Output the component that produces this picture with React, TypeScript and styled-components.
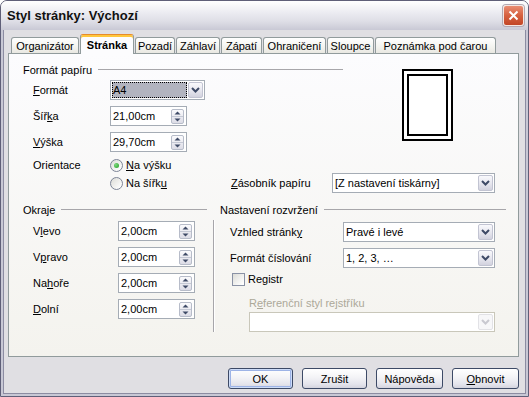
import React from "react";
import styled, { createGlobalStyle, css } from "styled-components";

const GlobalStyle = createGlobalStyle`
  html, body { margin: 0; padding: 0; background: #ffffff; }
  body { font-family: "Liberation Sans", Arial, sans-serif; font-size: 11px; color: #000; }
  * { box-sizing: border-box; }
`;

const Window = styled.div`
  width: 529px;
  height: 397px;
  display: flex;
  flex-direction: column;
  border: 1px solid #5f5f78;
  border-radius: 7px 7px 0 0;
  overflow: hidden;
  background: #e0dfe3;
`;

const TitleBar = styled.div`
  height: 29px;
  flex: none;
  display: flex;
  align-items: center;
  padding: 0 4px 0 6px;
  background: linear-gradient(180deg, #ffffff 0%, #eeeef3 35%, #dedee6 70%, #c9c9d5 100%);
`;

const Title = styled.div`
  flex: 1;
  font-family: "Liberation Sans", Arial, sans-serif;
  font-weight: bold;
  font-size: 13px;
  color: #111;
`;

const CloseButton = styled.div`
  width: 21px;
  height: 21px;
  border: 1px solid #f4e6e2;
  border-radius: 3px;
  background: linear-gradient(180deg, #e98d73 0%, #d6603f 50%, #c24626 100%);
  display: flex;
  align-items: center;
  justify-content: center;
  box-shadow: 0 0 0 1px #b3a9b3;
`;

const Frame = styled.div`
  flex: 1;
  display: flex;
  flex-direction: column;
  border: 2px solid #c8c8d5;
  border-top: 0;
  box-shadow: inset 1px 0 #8c8ca2, inset -1px 0 #8c8ca2, inset 0 -1px #8c8ca2;
  padding: 4px 7px 0 5px;
`;

const TabStrip = styled.div`
  position: relative;
  z-index: 1;
  height: 20px;
  margin-bottom: -1px;
  display: flex;
  align-items: flex-end;
  gap: 1px;
  padding-left: 3px;
`;

const Tab = styled.div<{ $w: number; $active?: boolean }>`
  width: ${(p) => p.$w}px;
  flex: none;
  display: flex;
  align-items: center;
  justify-content: center;
  white-space: nowrap;
  border: 1px solid #919b9c;
  border-bottom: 0;
  border-radius: 3px 3px 0 0;
  ${(p) =>
    p.$active
      ? css`
          height: 20px;
          font-weight: bold;
          border-top-color: #e68b2c;
          background: #fcfcfe;
          box-shadow: inset 0 2px #ffc73c;
          padding-top: 1px;
        `
      : css`
          height: 16px;
          margin-bottom: 1px;
          background: linear-gradient(180deg, #ffffff 0%, #f3f3ef 60%, #e9e8e2 100%);
        `}
`;

const Panel = styled.div`
  position: relative;
  height: 304px;
  flex: none;
  border: 1px solid #919b9c;
  background: linear-gradient(180deg, #fcfcfe 0%, #f4f3ee 100%);
  padding: 8px 14px 0 14px;
`;

const GroupHeader = styled.div<{ $w?: number }>`
  display: flex;
  align-items: center;
  gap: 6px;
  height: 16px;
  white-space: nowrap;
  ${(p) => (p.$w ? `width: ${p.$w}px;` : "")}
  &::after {
    content: "";
    flex: 1;
    border-top: 1px solid #a7a6aa;
    margin-top: -2px;
  }
`;

const PaperGrid = styled.div`
  display: grid;
  grid-template-columns: 87px 120px 102px 163px;
  grid-template-rows: 16px 22px 26px 26px 21px 20px;
  align-items: end;
`;

const Cell = styled.div<{ $col: string; $row: string; $h?: number }>`
  grid-column: ${(p) => p.$col};
  grid-row: ${(p) => p.$row};
  height: ${(p) => p.$h ?? 20}px;
  display: flex;
  align-items: center;
`;

const FieldLabel = styled.div<{ $indent?: number; $w?: number; $disabled?: boolean }>`
  padding-left: ${(p) => p.$indent ?? 10}px;
  ${(p) => (p.$w ? `width: ${p.$w}px; flex: none;` : "")}
  white-space: nowrap;
  color: ${(p) => (p.$disabled ? "#aca899" : "#000")};
`;

const U = styled.span`
  text-decoration: underline;
  text-underline-offset: 1px;
`;

const Field = styled.div<{ $w: number; $disabled?: boolean }>`
  width: ${(p) => p.$w}px;
  height: 20px;
  flex: none;
  display: flex;
  align-items: center;
  background: #ffffff;
  border: 1px solid ${(p) => (p.$disabled ? "#c9c7ba" : "#a5acb5")};
  padding: 1px;
`;

const FieldText = styled.div<{ $focused?: boolean }>`
  flex: 1;
  height: 100%;
  display: flex;
  align-items: center;
  padding-left: 1px;
  white-space: nowrap;
  ${(p) =>
    p.$focused &&
    css`
      background: #b2b4bf;
      outline: 1px dotted #000;
      outline-offset: -1px;
      margin-right: 1px;
    `}
`;

const SpinButton = styled.div`
  width: 13px;
  height: 15px;
  flex: none;
  display: flex;
  flex-direction: column;
  border: 1px solid #b7bcc9;
  border-radius: 2px;
  background: linear-gradient(180deg, #fbfbfd 0%, #dcdce6 100%);
  margin-right: 1px;
`;

const SpinHalf = styled.div<{ $top?: boolean }>`
  flex: 1;
  display: flex;
  align-items: center;
  justify-content: center;
  ${(p) => p.$top && "border-bottom: 1px solid #c4c8d4;"}
`;

const DropButton = styled.div<{ $disabled?: boolean }>`
  width: 15px;
  height: 16px;
  flex: none;
  display: flex;
  align-items: center;
  justify-content: center;
  border: 1px solid ${(p) => (p.$disabled ? "#e2e2e6" : "#c2c4d2")};
  border-radius: 2px;
  background: ${(p) =>
    p.$disabled ? "#f7f7f9" : "linear-gradient(180deg, #f9f9fc 0%, #e6e6ee 55%, #d2d2de 100%)"};
`;

const Preview = styled.div`
  grid-column: 4;
  grid-row: 1 / 5;
  align-self: start;
  margin: 7px 0 0 70px;
  width: 51px;
  height: 72px;
  border: 2px solid #000;
  background: #fff;
  padding: 3px;
`;

const PreviewInner = styled.div`
  width: 100%;
  height: 100%;
  border: 2px solid #000;
`;

const RadioRow = styled.div`
  display: flex;
  align-items: center;
  gap: 3px;
`;

const RadioCircle = styled.div<{ $checked?: boolean }>`
  width: 13px;
  height: 13px;
  border-radius: 50%;
  border: 1px solid #7d8597;
  background: linear-gradient(135deg, #dcdcd7 0%, #ffffff 90%);
  display: flex;
  align-items: center;
  justify-content: center;
  &::after {
    content: "";
    width: 5px;
    height: 5px;
    border-radius: 50%;
    background: ${(p) => (p.$checked ? "radial-gradient(circle at 35% 35%, #7fd77f, #21a121)" : "transparent")};
  }
`;

const CheckBox = styled.div`
  width: 13px;
  height: 13px;
  flex: none;
  border: 1px solid #8a92a5;
  background: linear-gradient(135deg, #dcdcd7 0%, #ffffff 90%);
`;

const LowerSection = styled.div`
  display: flex;
  margin-top: 9px;
`;

const LeftGroup = styled.div`
  width: 184px;
  flex: none;
`;

const MarginRows = styled.div`
  display: flex;
  flex-direction: column;
  gap: 6px;
  margin-top: 3px;
`;

const Row = styled.div<{ $mt?: number; $h?: number; $indent?: number }>`
  display: flex;
  align-items: center;
  height: ${(p) => p.$h ?? 20}px;
  margin-top: ${(p) => p.$mt ?? 0}px;
  padding-left: ${(p) => p.$indent ?? 0}px;
`;

const VLine = styled.div`
  width: 2px;
  height: 112px;
  flex: none;
  margin: 18px 5px 0 6px;
  border-left: 1px solid #a7a6aa;
  border-right: 1px solid #ffffff;
`;

const RightGroup = styled.div`
  width: 286px;
  flex: none;
`;

const CheckRow = styled.div`
  display: flex;
  align-items: center;
  gap: 3px;
`;

const ButtonRow = styled.div`
  display: flex;
  justify-content: flex-end;
  gap: 9px;
  margin-top: 11px;
`;

const Button = styled.div<{ $w: number; $default?: boolean }>`
  width: ${(p) => p.$w}px;
  height: 21px;
  display: flex;
  align-items: center;
  justify-content: center;
  border: 1px solid #3d4a66;
  border-radius: 3px;
  background: linear-gradient(180deg, #ffffff 0%, #f3f3f6 45%, #e4e4ec 80%, #d4d4de 100%);
  ${(p) =>
    p.$default &&
    css`
      box-shadow: inset 0 0 0 1px #cddcf8, inset 0 0 0 2px #9db3e6;
    `}
`;

const Chevron = ({ color = "#3e4a66" }: { color?: string }) => (
  <svg width="9" height="6" viewBox="0 0 9 6">
    <path d="M1 1 L4.5 4.5 L8 1" stroke={color} strokeWidth="2" fill="none" />
  </svg>
);

const Arrow = ({ up }: { up?: boolean }) => (
  <svg width="7" height="4" viewBox="0 0 7 4">
    <path d={up ? "M0.5 3.5 L3.5 0.5 L6.5 3.5 Z" : "M0.5 0.5 L3.5 3.5 L6.5 0.5 Z"} fill="#3e4a66" />
  </svg>
);

const Spin = ({ value, w }: { value: string; w: number }) => (
  <Field $w={w}>
    <FieldText>{value}</FieldText>
    <SpinButton>
      <SpinHalf $top>
        <Arrow up />
      </SpinHalf>
      <SpinHalf>
        <Arrow />
      </SpinHalf>
    </SpinButton>
  </Field>
);

const Combo = ({
  value,
  w,
  focused,
  disabled,
}: {
  value: string;
  w: number;
  focused?: boolean;
  disabled?: boolean;
}) => (
  <Field $w={w} $disabled={disabled}>
    <FieldText $focused={focused}>{value}</FieldText>
    <DropButton $disabled={disabled}>
      <Chevron color={disabled ? "#c9c9d0" : "#3e4a66"} />
    </DropButton>
  </Field>
);

const tabs = [
  { label: "Organizátor", w: 68 },
  { label: "Stránka", w: 54, active: true },
  { label: "Pozadí", w: 40 },
  { label: "Záhlaví", w: 44 },
  { label: "Zápatí", w: 41 },
  { label: "Ohraničení", w: 63 },
  { label: "Sloupce", w: 47 },
  { label: "Poznámka pod čarou", w: 121 },
];

const margins: { label: React.ReactNode; value: string }[] = [
  { label: <>V<U>l</U>evo</>, value: "2,00cm" },
  { label: <>V<U>p</U>ravo</>, value: "2,00cm" },
  { label: <>Na<U>h</U>oře</>, value: "2,00cm" },
  { label: <><U>D</U>olní</>, value: "2,00cm" },
];

export default function App() {
  return (
    <>
      <GlobalStyle />
      <Window>
        <TitleBar>
          <Title>Styl stránky: Výchozí</Title>
          <CloseButton>
            <svg width="11" height="11" viewBox="0 0 11 11">
              <path d="M1.5 1.5 L9.5 9.5 M9.5 1.5 L1.5 9.5" stroke="#ffffff" strokeWidth="2" />
            </svg>
          </CloseButton>
        </TitleBar>
        <Frame>
          <TabStrip>
            {tabs.map((t) => (
              <Tab key={t.label} $w={t.w} $active={t.active}>
                {t.label}
              </Tab>
            ))}
          </TabStrip>
          <Panel>
            <PaperGrid>
              <Cell $col="1 / 5" $row="1" $h={16}>
                <GroupHeader $w={320}>Formát papíru</GroupHeader>
              </Cell>
              <Preview>
                <PreviewInner />
              </Preview>

              <Cell $col="1" $row="2">
                <FieldLabel>
                  <U>F</U>ormát
                </FieldLabel>
              </Cell>
              <Cell $col="2" $row="2">
                <Combo value="A4" w={95} focused />
              </Cell>

              <Cell $col="1" $row="3">
                <FieldLabel>
                  Šíř<U>k</U>a
                </FieldLabel>
              </Cell>
              <Cell $col="2" $row="3">
                <Spin value="21,00cm" w={77} />
              </Cell>

              <Cell $col="1" $row="4">
                <FieldLabel>
                  <U>V</U>ýška
                </FieldLabel>
              </Cell>
              <Cell $col="2" $row="4">
                <Spin value="29,70cm" w={77} />
              </Cell>

              <Cell $col="1" $row="5" $h={16}>
                <FieldLabel>Orientace</FieldLabel>
              </Cell>
              <Cell $col="2" $row="5" $h={16}>
                <RadioRow>
                  <RadioCircle $checked />
                  <span>
                    <U>N</U>a výšku
                  </span>
                </RadioRow>
              </Cell>

              <Cell $col="2" $row="6">
                <RadioRow>
                  <RadioCircle />
                  <span>
                    Na šířk<U>u</U>
                  </span>
                </RadioRow>
              </Cell>
              <Cell $col="3" $row="6">
                <FieldLabel $indent={1}>
                  <U>Z</U>ásobník papíru
                </FieldLabel>
              </Cell>
              <Cell $col="4" $row="6">
                <Combo value="[Z nastavení tiskárny]" w={163} />
              </Cell>
            </PaperGrid>

            <LowerSection>
              <LeftGroup>
                <GroupHeader>Okraje</GroupHeader>
                <MarginRows>
                  {margins.map((m, i) => (
                    <Row key={i}>
                      <FieldLabel $w={95}>{m.label}</FieldLabel>
                      <Spin value={m.value} w={77} />
                    </Row>
                  ))}
                </MarginRows>
              </LeftGroup>
              <VLine />
              <RightGroup>
                <GroupHeader>Nastavení rozvržení</GroupHeader>
                <Row $mt={4}>
                  <FieldLabel $w={123}>
                    Vzhled stránk<U>y</U>
                  </FieldLabel>
                  <Combo value="Pravé i levé" w={152} />
                </Row>
                <Row $mt={6}>
                  <FieldLabel $w={123}>Formát číslování</FieldLabel>
                  <Combo value="1, 2, 3, …" w={152} />
                </Row>
                <Row $mt={3} $h={16} $indent={12}>
                  <CheckRow>
                    <CheckBox />
                    <span>Registr</span>
                  </CheckRow>
                </Row>
                <Row $mt={9} $h={14}>
                  <FieldLabel $indent={29} $disabled>
                    R<U>e</U>ferenční styl rejstříku
                  </FieldLabel>
                </Row>
                <Row $mt={2} $indent={29}>
                  <Combo value="" w={246} disabled />
                </Row>
              </RightGroup>
            </LowerSection>
          </Panel>
          <ButtonRow>
            <Button $w={65} $default>
              OK
            </Button>
            <Button $w={65}>Zrušit</Button>
            <Button $w={67}>Nápověda</Button>
            <Button $w={67}>
              <span>
                <U>O</U>bnovit
              </span>
            </Button>
          </ButtonRow>
        </Frame>
      </Window>
    </>
  );
}
